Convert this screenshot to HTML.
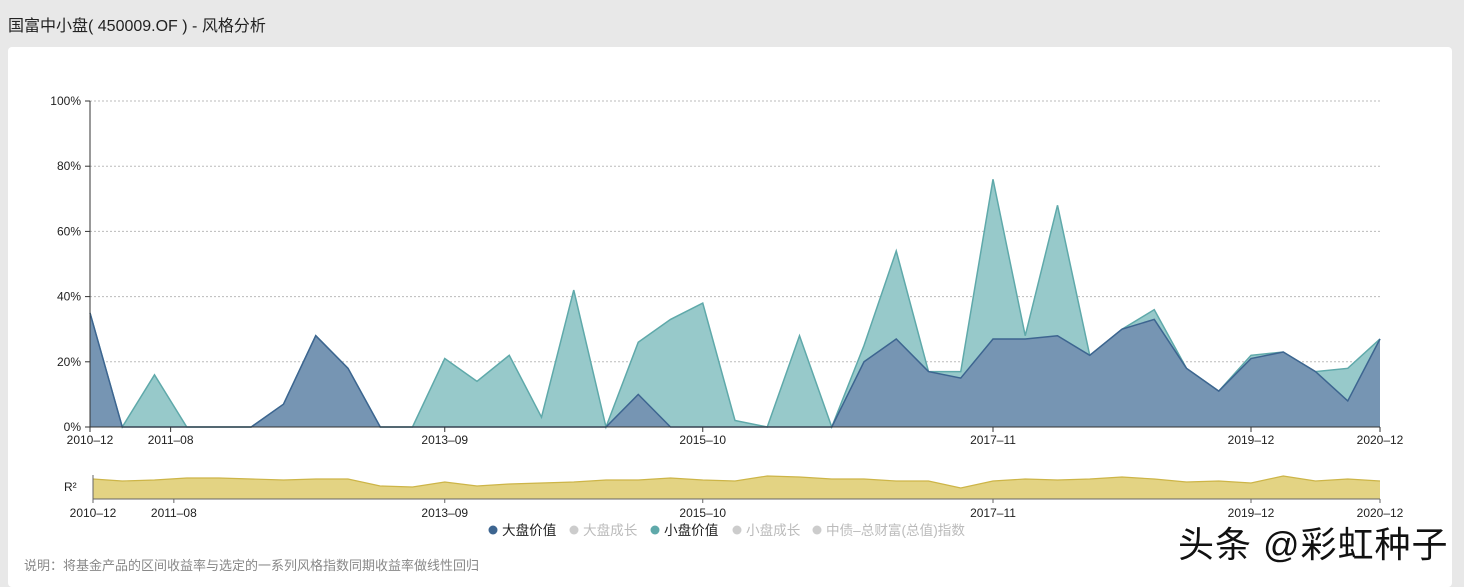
<!DOCTYPE html>
<html><head><meta charset="utf-8"><style>
body{margin:0;width:1464px;height:579px;background:#e8e8e8;font-family:"Liberation Sans","Noto Sans CJK SC",sans-serif;overflow:hidden;position:relative}
.t{position:absolute;left:8px;top:12px;font-size:16px;color:#222}
.card{position:absolute;left:8px;top:47px;width:1444px;height:540px;background:#fff;border-radius:4px}
svg{position:absolute;left:0;top:0}
.wm{position:absolute;left:1178px;top:516px;font-size:36px;color:#111;letter-spacing:1px;text-shadow:2px 2px 0 #fff,-1px -1px 0 #fff}
.note{position:absolute;left:24px;top:555px;font-size:13px;color:#888}
</style></head><body>
<div class="t">国富中小盘( 450009.OF ) - 风格分析</div>
<div class="card"></div>
<svg id="s" width="1464" height="579" font-family="Liberation Sans, Noto Sans CJK SC, sans-serif"></svg>
<div class="note">说明：将基金产品的区间收益率与选定的一系列风格指数同期收益率做线性回归</div>
<div class="wm">头条 @彩虹种子</div>
<script>
var s=document.getElementById('s'),h='';
var X=i=>90+i*32.25,Y=v=>427-v*3.26;
for(var k=0;k<=5;k++){var y=Y(k*20);h+='<line x1="90" x2="1380" y1="'+y+'" y2="'+y+'" stroke="#bbb" stroke-dasharray="2,2"/><line x1="85" x2="90" y1="'+y+'" y2="'+y+'" stroke="#333"/><text x="81" y="'+(y+4)+'" font-size="12" text-anchor="end" fill="#222">'+(k*20)+'%</text>';}
var t=[35,0,16,0,0,0,7,28,18,0,0,21,14,22,3,42,0,26,33,38,2,0,28,0,25,54,17,17,76,28,68,22,30,36,18,11,22,23,17,18,27];
var d=[35,0,0,0,0,0,7,28,18,0,0,0,0,0,0,0,0,10,0,0,0,0,0,0,20,27,17,15,27,27,28,22,30,33,18,11,21,23,17,8,27];
function ar(a){var p='M90,427';a.forEach((v,i)=>p+=' L'+X(i)+','+Y(v));return p+' L1380,427Z';}
function ln(a){var p='';a.forEach((v,i)=>p+=(i?' L':'M')+X(i)+','+Y(v));return p;}
h+='<path d="'+ar(t)+'" fill="#97c9ca"/><path d="'+ln(t)+'" fill="none" stroke="#5fa9aa" stroke-width="1.5"/>';
h+='<path d="'+ar(d)+'" fill="#7695b3"/><path d="'+ln(d)+'" fill="none" stroke="#3d6590" stroke-width="1.5"/>';
h+='<line x1="90" x2="90" y1="101" y2="427" stroke="#333"/><line x1="90" x2="1380" y1="427" y2="427" stroke="#333"/>';
var lab=[[0,'2010–12'],[3,'2011–08'],[11,'2013–09'],[19,'2015–10'],[28,'2017–11'],[36,'2019–12'],[40,'2020–12']];
lab.forEach(l=>{var x=X(l[1]=='2011–08'?2.5:l[0]);h+='<line x1="'+x+'" x2="'+x+'" y1="427" y2="432" stroke="#333"/><text x="'+x+'" y="444" font-size="12" text-anchor="middle" fill="#222">'+l[1]+'</text>';});
var r=[479,481,480,478,478,479,480,479,479,486,487,482,486,484,483,482,480,480,478,480,481,476,477,479,479,481,481,488,481,479,480,479,477,479,482,481,483,476,481,479,481];
var p='M93,499';r.forEach((v,i)=>p+=' L'+Math.max(93,X(i))+','+v);p+=' L1380,499Z';
var q='';r.forEach((v,i)=>q+=(i?' L':'M')+Math.max(93,X(i))+','+v);
h+='<path d="'+p+'" fill="#e3d383"/><path d="'+q+'" fill="none" stroke="#cdb548" stroke-width="1.2"/>';
h+='<line x1="93" x2="93" y1="475" y2="499" stroke="#666"/><line x1="93" x2="1380" y1="499" y2="499" stroke="#666"/><text x="64" y="491" font-size="12" fill="#222">R²</text>';
lab.forEach(l=>{var x=X(l[1]=='2011–08'?2.6:l[0]);if(l[0]==0)x=93;h+='<line x1="'+x+'" x2="'+x+'" y1="499" y2="503" stroke="#666"/><text x="'+x+'" y="517" font-size="12" text-anchor="middle" fill="#222">'+l[1]+'</text>';});
var lg=[[493,'#3d6590','大盘价值','#222'],[574,'#ccc','大盘成长','#bbb'],[655,'#5fa9aa','小盘价值','#222'],[737,'#ccc','小盘成长','#bbb'],[817,'#ccc','中债–总财富(总值)指数','#bbb']];
lg.forEach(g=>{h+='<circle cx="'+g[0]+'" cy="530" r="4.5" fill="'+g[1]+'"/><text x="'+(g[0]+9)+'" y="535" font-size="13.6" fill="'+g[3]+'">'+g[2]+'</text>';});
s.innerHTML=h;
</script>
</body></html>
